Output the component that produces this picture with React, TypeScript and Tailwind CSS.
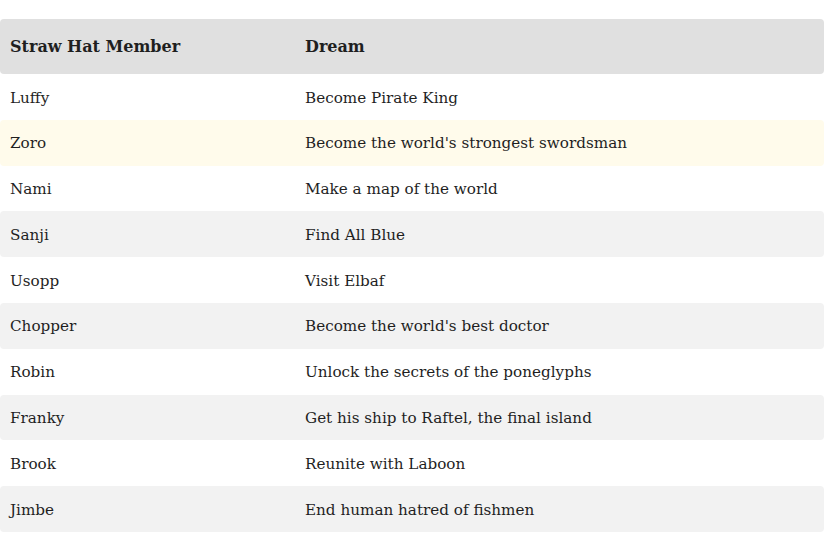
const crew = [
  { name: "Luffy", dream: "Become Pirate King" },
  { name: "Zoro", dream: "Become the world's strongest swordsman" },
  { name: "Nami", dream: "Make a map of the world" },
  { name: "Sanji", dream: "Find All Blue" },
  { name: "Usopp", dream: "Visit Elbaf" },
  { name: "Chopper", dream: "Become the world's best doctor" },
  { name: "Robin", dream: "Unlock the secrets of the poneglyphs" },
  { name: "Franky", dream: "Get his ship to Raftel, the final island" },
  { name: "Brook", dream: "Reunite with Laboon" },
  { name: "Jimbe", dream: "End human hatred of fishmen" },
]

function rowBg(i: number) {
  if (i === 1) return "bg-[#fffbeb]"
  if (i % 2 === 1) return "bg-[#f2f2f2]"
  return "bg-white"
}

export default function App() {
  return (
    <div className="min-h-screen bg-white pt-[19px] font-['DejaVu_Serif',serif] text-[15.2px] text-[#1f1f1f]">
      <div className="w-[824px]">
        <div className="grid h-[55px] grid-cols-[305px_1fr] items-center rounded bg-[#e0e0e0] text-[16px] font-bold">
          <div className="pl-[10px]">Straw Hat Member</div>
          <div>Dream</div>
        </div>
        {crew.map((c, i) => (
          <div key={c.name} className={`grid h-[45.8px] grid-cols-[305px_1fr] items-center rounded pt-[2px] ${rowBg(i)}`}>
            <div className="pl-[10px]">{c.name}</div>
            <div>{c.dream}</div>
          </div>
        ))}
      </div>
    </div>
  )
}
